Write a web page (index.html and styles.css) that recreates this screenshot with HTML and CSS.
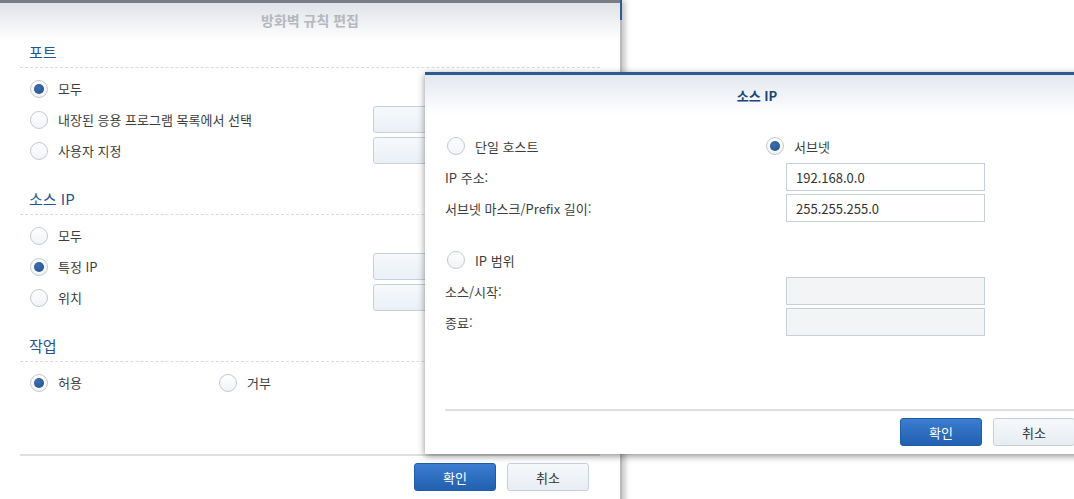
FILE: index.html
```html
<!DOCTYPE html>
<html lang="ko">

<head>
  <meta charset="UTF-8" />
  <title>방화벽 규칙 편집</title>
  <link rel="stylesheet" href="styles.css">
</head>

<body>
  <div class="desk">

    <section class="win win-back">
      <header class="win-head">방화벽 규칙 편집</header>
      <div class="win-body">
        <div class="group">
          <h3 class="group-title">포트</h3>
          <div class="opts">
            <label class="opt"><span class="radio on"></span>모두</label>
            <span></span>
            <label class="opt"><span class="radio"></span>내장된 응용 프로그램 목록에서 선택</label>
            <span class="field soft"></span>
            <label class="opt"><span class="radio"></span>사용자 지정</label>
            <span class="field soft"></span>
          </div>
        </div>

        <div class="group">
          <h3 class="group-title">소스 IP</h3>
          <div class="opts">
            <label class="opt"><span class="radio"></span>모두</label>
            <span></span>
            <label class="opt"><span class="radio on"></span>특정 IP</label>
            <span class="field soft"></span>
            <label class="opt"><span class="radio"></span>위치</label>
            <span class="field soft"></span>
          </div>
        </div>

        <div class="group">
          <h3 class="group-title">작업</h3>
          <div class="opts opts-inline">
            <label class="opt"><span class="radio on"></span>허용</label>
            <label class="opt"><span class="radio"></span>거부</label>
          </div>
        </div>
      </div>
      <footer class="win-foot">
        <button class="btn btn-primary">확인</button>
        <button class="btn">취소</button>
      </footer>
    </section>

    <section class="win win-front">
      <header class="win-head">소스 IP</header>
      <div class="win-body">
        <div class="form">
          <label class="opt"><span class="radio"></span>단일 호스트</label>
          <label class="opt opt-shift"><span class="radio on"></span>서브넷</label>

          <span class="lbl">IP 주소:</span>
          <span class="field">192.168.0.0</span>

          <span class="lbl">서브넷 마스크/Prefix 길이:</span>
          <span class="field">255.255.255.0</span>
        </div>

        <div class="form form-range">
          <label class="opt"><span class="radio"></span>IP 범위</label>
          <span></span>

          <span class="lbl">소스/시작:</span>
          <span class="field off"></span>

          <span class="lbl">종료:</span>
          <span class="field off"></span>
        </div>
      </div>
      <footer class="win-foot">
        <button class="btn btn-primary">확인</button>
        <button class="btn">취소</button>
      </footer>
    </section>

  </div>
</body>

</html>
```

FILE: styles.css
```css
body {
  margin: 0;
  background: #fff;
  font-family: "Noto Sans CJK KR", sans-serif;
  font-size: 13px;
  color: #3d3d3d;
}

.desk {
  position: relative;
  width: 1074px;
  height: 499px;
  overflow: hidden;
}

/* windows */
.win {
  position: absolute;
  display: flex;
  flex-direction: column;
  background: #fff;
  box-sizing: border-box;
}

.win-head {
  height: 40px;
  display: flex;
  justify-content: center;
  align-items: center;
  font-weight: bold;
  font-size: 13px;
  background: linear-gradient(#dfe2e7, #ffffff);
}

.win-foot {
  display: flex;
  justify-content: flex-end;
  gap: 11px;
  border-top: 2px solid #dedfe1;
  padding: 7px 0 8px;
}

.win-back {
  left: 0;
  top: 0;
  width: 622px;
  height: 540px;
  border-top: 3px solid #797c84;
  border-right: 2px solid #b7b9bd;
  box-shadow: 3px 0 6px rgba(0, 0, 0, 0.25);
}

.win-back::after {
  content: "";
  position: absolute;
  right: -2px;
  top: -3px;
  width: 2px;
  height: 20px;
  background: #2d5b94;
}

.win-back .win-head {
  height: 37px;
  box-sizing: border-box;
  padding-bottom: 3px;
  font-size: 14px;
  color: #b4b8be;
}

.win-back .win-body {
  margin: 0 20px;
}

.win-back .win-foot {
  margin: 0 20px;
  padding-right: 11px;
  margin-top: 56px;
}

.group {
  margin-top: 23px;
}

.group:first-child {
  margin-top: 2px;
}

.group-title {
  margin: 0;
  padding: 0 9px 5px;
  line-height: 20px;
  font-size: 15px;
  font-weight: normal;
  color: #24548f;
  border-bottom: 1px dashed #d6dce4;
}

.opts {
  display: grid;
  grid-template-columns: 343px 200px;
  grid-auto-rows: 31px;
  align-items: center;
  margin-top: 5px;
  padding-left: 10px;
}

.opts-inline {
  grid-template-columns: 189px 189px;
}

.opt {
  display: flex;
  align-items: center;
  gap: 10px;
}

/* radio buttons */
.radio {
  width: 16px;
  height: 16px;
  flex: none;
  border-radius: 50%;
  border: 1px solid #c3cad3;
  background: linear-gradient(#ffffff, #f1f3f6);
  position: relative;
}

.radio.on::after {
  content: "";
  position: absolute;
  left: 3px;
  top: 3px;
  width: 10px;
  height: 10px;
  border-radius: 50%;
  background: radial-gradient(circle at 40% 35%, #3c6fb0, #244f8b);
}

/* text fields */
.field {
  height: 27px;
  box-sizing: border-box;
  border: 1px solid #c7d0da;
  background: #fff;
  display: flex;
  align-items: center;
  padding-left: 9px;
  font-size: 13px;
  color: #333;
}

.field.soft {
  border-radius: 3px;
  background: linear-gradient(#f6f9fc, #eaf0f6);
}

.field.off {
  background: #f3f4f6;
}

/* front dialog */
.win-front {
  left: 425px;
  top: 72px;
  width: 664px;
  height: 382px;
  border-top: 3px solid #2c5a93;
  box-shadow: 0 2px 7px rgba(0, 0, 0, 0.45);
}

.win-front .win-head {
  color: #1f4675;
  background: linear-gradient(#e3e8ef, #ffffff);
}

.win-front .win-body {
  flex: 1;
  padding: 17px 0 0 20px;
}

.win-front .win-foot {
  margin: 0 14px 0 20px;
}

.form {
  display: grid;
  grid-template-columns: 341px 199px;
  grid-auto-rows: 28px;
  row-gap: 3px;
  align-items: center;
}

.form-range {
  margin-top: 24px;
}

.form .opt {
  padding-left: 2px;
}

.form .field {
  height: 28px;
}

.opt-shift {
  margin-left: -22px;
}

/* buttons */
.btn {
  width: 82px;
  height: 28px;
  border-radius: 3px;
  border: 1px solid #c6d0dc;
  background: linear-gradient(#f6f8fb, #e8edf2);
  font-family: inherit;
  font-size: 13px;
  color: #333;
  padding: 0;
}

.btn-primary {
  border-color: #1f5ba6;
  background: linear-gradient(#3b7dd1, #2160ae);
  color: #fff;
}
```
